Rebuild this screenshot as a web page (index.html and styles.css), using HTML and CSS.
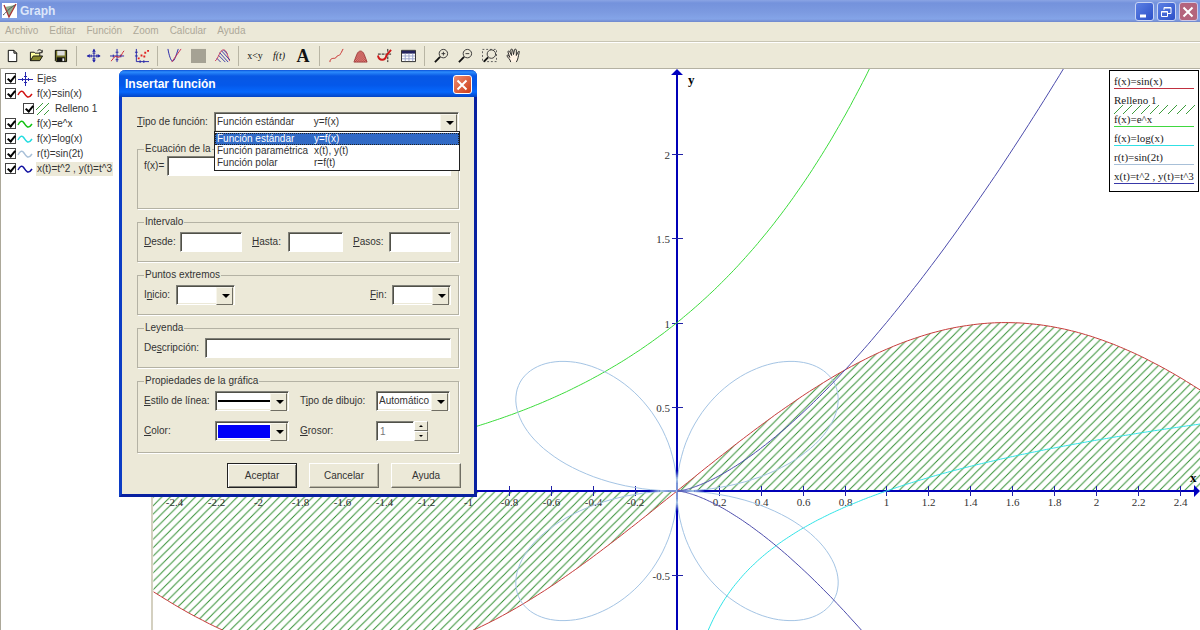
FILE: index.html
```html
<!DOCTYPE html>
<html lang="es">
<head>
  <meta charset="UTF-8" />
  <meta name="viewport" content="width=device-width, initial-scale=1.0"/>
  <title>Graph</title>
  <link rel="stylesheet" href="styles.css">
</head>
<body>
  <header class="titlebar">
    <svg class="app-icon" width="16" height="16" viewBox="0 0 16 16">
      <rect width="15" height="15" fill="#fff"/>
      <path d="M3 4l4 10L13 2z" fill="#8fae8c"/>
      <path d="M2 2l5 12L14 1" fill="none" stroke="#a33" stroke-width="1.3"/>
      <path d="M1 12c3-2 5-6 12-10" fill="none" stroke="#555"/>
    </svg>
    <h1>Graph</h1>
    <div class="win-buttons">
      <button aria-label="Minimizar"><svg width="18" height="18"><path d="M5 13h6" stroke="#fff" stroke-width="3"/></svg></button>
      <button aria-label="Restaurar"><svg width="18" height="18" fill="none" stroke="#fff"><path d="M7 7V4.500h7v6h-3M7 5h7M4.500 8.500h6v5h-6zM4 9h7"/></svg></button>
      <button class="close dim" aria-label="Cerrar"><svg width="18" height="18"><path d="M4.500 4.500l9 9M13.500 4.500l-9 9" stroke="#fff" stroke-width="2"/></svg></button>
    </div>
  </header>

  <nav class="menubar">
    <a href="#">Archivo</a>
    <a href="#">Editar</a>
    <a href="#">Función</a>
    <a href="#">Zoom</a>
    <a href="#">Calcular</a>
    <a href="#">Ayuda</a>
  </nav>

  <div class="toolbar">
    <button aria-label="Nuevo"><svg viewBox="0 0 16 16"><path d="M3.500 2.500h6l3 3v9h-9zM9.500 2.500v3h3" fill="#fff" stroke="#000"/></svg></button>
    <button aria-label="Abrir"><svg viewBox="0 0 16 16"><path d="M1.500 13.500v-9h4l1 1h5v3" fill="#ffffa0" stroke="#111"/><path d="M1.500 13.500l3-5h10l-3 5z" fill="#87872a" stroke="#111"/><path d="M9 3c2-2 4-1 5 1m0-2v3h-3" fill="none" stroke="#111"/></svg></button>
    <button aria-label="Guardar"><svg viewBox="0 0 16 16"><path d="M2.500 2.500h12v12h-11l-1-1z" fill="#75752b" stroke="#000"/><path d="M4.500 3h8v5h-8z" fill="#ddd"/><path d="M4 10h9v4H4z" fill="#111"/><path d="M10 11h2v3h-2z" fill="#eee"/></svg></button>
    <span class="sep"></span>
    <button aria-label="Ejes"><svg viewBox="0 0 16 16"><path d="M8.500 1v14M1 8.500h14" stroke="#2222a8"/><path d="M8.500 1l-2 3h4zM8.500 15.500l-2-3h4zM1 8.500l3-2v4zM15.500 8.500l-3-2v4z" fill="#2222a8"/><path d="M5.500 7v3M11.500 7v3M7 5.500h3M7 11.500h3" stroke="#2222a8"/></svg></button>
    <button aria-label="Insertar función"><svg viewBox="0 0 16 16" fill="none"><path d="M7.500 1v14M0 8.500h15M3.500 7v3M11.500 7v3M6 4.500h3M6 12.500h3" stroke="#2222a8"/><path d="M1 14c2-1 3-5 5-5s3 2 5 0 2-4 4-6" stroke="#d02030"/></svg></button>
    <button aria-label="Insertar puntos"><svg viewBox="0 0 16 16"><path d="M2.500 1v13.500H16M1 4.500h3M1 8.500h3M6.500 13v3M10.500 13v3" fill="none" stroke="#2222a8"/><path d="M4 10h2v2H4zM7 7h2v2H7zM10 8h2v2h-2zM11 4h2v2h-2zM14 2h2v2h-2z" fill="#e02020"/></svg></button>
    <span class="sep"></span>
    <button aria-label="Tangente"><svg viewBox="0 0 16 16" fill="none"><path d="M1 1c1 6 3 13 5 13s4-7 6-13" stroke="#2222a8"/><path d="M5 15L15 1" stroke="#d03050"/></svg></button>
    <button aria-label="Sombreado"><svg viewBox="0 0 16 16"><path d="M0 1h16v15H0z" fill="#a5a294"/></svg></button>
    <button aria-label="Relleno"><svg viewBox="0 0 16 16" fill="none"><path d="M0 14C4 11 5 2 9 2s4 7 7 12" stroke="#d03050"/><path d="M7 3l9 10M5 5l9 10M4 8l7 7M2 11l4 4M9 2l4 4" stroke="#3838a8"/></svg></button>
    <span class="sep"></span>
    <button class="text-icon" aria-label="Relación">x&lt;y</button>
    <button class="text-icon fn" aria-label="f(t)">f(t)</button>
    <button class="text-icon big" aria-label="Texto">A</button>
    <span class="sep"></span>
    <button aria-label="Trazar"><svg viewBox="0 0 16 16" fill="none"><path d="M1 15c0-4 3-4 5-4s2-3 4-3 2-2 3-3 1-3 2-4" stroke="#c82828"/></svg></button>
    <button aria-label="Área"><svg viewBox="0 0 16 16"><path d="M1 15L4 7c2-5 6-5 8 0l3 8z" fill="url(#dots)" stroke="#a04040"/></svg></button>
    <button aria-label="Derivada"><svg viewBox="0 0 16 16" fill="none"><path d="M1 6.500h14M11.500 1v14" stroke="#111" stroke-dasharray="3 1"/><path d="M1 8c1 6 8 6 9 0l5-6" stroke="#d01818" stroke-width="2"/></svg></button>
    <button aria-label="Tabla"><svg viewBox="0 0 16 16"><path d="M.5 2.500h15v12H.5z" fill="#fff" stroke="#222"/><path d="M1 3h14v3H1z" fill="#24245e"/><path d="M1 8.500h14M1 11.500h14M4.500 6v8M8.500 6v8M12.500 6v8" stroke="#9aa4cc"/></svg></button>
    <span class="sep"></span>
    <button aria-label="Acercar"><svg viewBox="0 0 16 16" fill="none" stroke="#333"><circle cx="10" cy="6" r="4.500"/><path d="M8 6h4M10 4v4"/><path d="M6.500 9.500L1 15" stroke="#111" stroke-width="2"/></svg></button>
    <button aria-label="Alejar"><svg viewBox="0 0 16 16" fill="none" stroke="#333"><circle cx="10" cy="6" r="4.500"/><path d="M8 6h4"/><path d="M6.500 9.500L1 15" stroke="#111" stroke-width="2"/></svg></button>
    <button aria-label="Zoom ventana"><svg viewBox="0 0 16 16" fill="none" stroke="#333"><path d="M.5 1.500h15v13H.5z" stroke="#555" stroke-dasharray="2 2"/><circle cx="10" cy="6.500" r="4.500"/><path d="M6.500 10L2 14.500" stroke="#111" stroke-width="2"/></svg></button>
    <button aria-label="Mover"><svg viewBox="0 0 16 16"><path d="M5 15c0-3-4-5-4-7 1-1 2 0 3 2L2 4c0-1 2-1 2 0l2 4-1-6c0-1 2-1 2 0l1 5 1-5c0-1 2-1 2 0v6l2-4c1-1 2 0 1 1-1 4-1 7-3 10" fill="#fff3e4" stroke="#222"/></svg></button>
  </div>

  <main class="workspace">
    <ul class="tree">
      <li><input type="checkbox" id="t0" checked><svg viewBox="0 0 16 14"><path d="M8.500 0v14M1 7.500h15M5.500 6v3M11.500 6v3M7 4.500h3M7 10.500h3" stroke="#2828b0"/></svg><label for="t0">Ejes</label></li>
      <li><input type="checkbox" id="t1" checked><svg viewBox="0 0 16 14"><use href="#wave" stroke="#d01010"/></svg><label for="t1">f(x)=sin(x)</label></li>
      <li class="child"><input type="checkbox" id="t2" checked><svg viewBox="0 0 16 14"><path d="M1 8l7-7M2 13L14 1M9 13l5-5" stroke="#3c9c3c"/></svg><label for="t2">Relleno 1</label></li>
      <li><input type="checkbox" id="t3" checked><svg viewBox="0 0 16 14"><use href="#wave" stroke="#10c010"/></svg><label for="t3">f(x)=e^x</label></li>
      <li><input type="checkbox" id="t4" checked><svg viewBox="0 0 16 14"><use href="#wave" stroke="#20dce0"/></svg><label for="t4">f(x)=log(x)</label></li>
      <li><input type="checkbox" id="t5" checked><svg viewBox="0 0 16 14"><use href="#wave" stroke="#a8c0d8"/></svg><label for="t5">r(t)=sin(2t)</label></li>
      <li><input type="checkbox" id="t6" checked><svg viewBox="0 0 16 14"><use href="#wave" stroke="#1010a0"/></svg><label class="selected" for="t6">x(t)=t^2 , y(t)=t^3</label></li>
    </ul>

    <section class="plot">
      <svg id="graph" viewBox="0 0 1047 561" preserveAspectRatio="xMinYMin slice">
        <defs>
          <pattern id="hatch" width="8" height="8" patternUnits="userSpaceOnUse" patternTransform="scale(1.05)">
            <path d="M-1 9L9-1M-1 1L1-1M7 9L9 7" stroke="#2c8c2c" stroke-width=".9"/>
          </pattern>
          <pattern id="dots" width="2" height="2" patternUnits="userSpaceOnUse">
            <path d="M0 0h2v2H0z" fill="#e8b0a8"/><path d="M0 0h1v1H0zM1 1h1v1H1z" fill="#b02020"/>
          </pattern>
          <path id="wave" d="M1 8c2-4 4-5 6-2s4 7 8 1" fill="none" stroke-width="1.500"/>
        </defs>
      </svg>
      <div class="legend">
        <p class="c-sin">f(x)=sin(x)</p>
        <p class="fill">Relleno 1<svg width="82" height="9"><path d="M0 9l9-9M9 9l9-9M18 9l9-9M27 9l9-9M36 9l9-9M45 9l9-9M54 9l9-9M63 9l9-9M72 9l9-9" stroke="#3c9c3c"/></svg></p>
        <p class="c-exp">f(x)=e^x</p>
        <p class="c-log">f(x)=log(x)</p>
        <p class="c-polar">r(t)=sin(2t)</p>
        <p class="c-param">x(t)=t^2 , y(t)=t^3</p>
      </div>
    </section>
  </main>

  <div class="dialog" role="dialog" aria-labelledby="dlg-title">
    <div class="dialog-title">
      <h2 id="dlg-title">Insertar función</h2>
      <button class="close" aria-label="Cerrar"><svg width="18" height="18"><path d="M4.500 4.500l9 9M13.500 4.500l-9 9" stroke="#fff" stroke-width="2"/></svg></button>
    </div>
    <form class="dialog-body">
      <div class="row type-row">
        <label for="tipo"><u>T</u>ipo de función:</label>
        <span class="combo">
          <select id="tipo"><option>Función estándar&nbsp;&nbsp;&nbsp;&nbsp;&nbsp;&nbsp;&nbsp;y=f(x)</option></select>
        </span>
        <ul class="dropdown">
          <li class="active"><span>Función estándar</span><span>y=f(x)</span></li>
          <li><span>Función paramétrica</span><span>x(t), y(t)</span></li>
          <li><span>Función polar</span><span>r=f(t)</span></li>
        </ul>
      </div>

      <fieldset class="equation">
        <legend>Ecuación de la</legend>
        <div class="row"><label for="fx">f(x)=</label><input type="text" id="fx" class="wide"></div>
      </fieldset>

      <fieldset>
        <legend>Intervalo</legend>
        <div class="row spread">
          <div class="row"><label class="l-short" for="desde"><u>D</u>esde:</label><input type="text" id="desde"></div>
          <div class="row"><label class="l-short" for="hasta"><u>H</u>asta:</label><input type="text" id="hasta" class="narrow"></div>
          <div class="row"><label class="l-short" for="pasos"><u>P</u>asos:</label><input type="text" id="pasos"></div>
        </div>
      </fieldset>

      <fieldset>
        <legend>Puntos extremos</legend>
        <div class="row spread">
          <div class="row"><label class="l-ini" for="inicio">I<u>n</u>icio:</label><span class="combo small"><select id="inicio"><option></option></select></span></div>
          <div class="row"><label class="l-fin" for="fin"><u>F</u>in:</label><span class="combo small"><select id="fin"><option></option></select></span></div>
        </div>
      </fieldset>

      <fieldset>
        <legend>Leyenda</legend>
        <div class="row"><label class="l-desc" for="desc">De<u>s</u>cripción:</label><input type="text" id="desc" class="wide"></div>
      </fieldset>

      <fieldset class="props">
        <legend>Propiedades de la gráfica</legend>
        <div class="props-grid">
          <label for="estilo"><u>E</u>stilo de línea:</label>
          <span class="combo line"><select id="estilo"><option></option></select></span>
          <label for="dibujo">T<u>i</u>po de dibujo:</label>
          <span class="combo"><select id="dibujo"><option>Automático</option></select></span>
          <label for="color"><u>C</u>olor:</label>
          <span class="combo color"><select id="color"><option></option></select></span>
          <label for="grosor"><u>G</u>rosor:</label>
          <span class="spin">
            <input type="text" id="grosor" value="1">
            <span class="spin-buttons">
              <button type="button" aria-label="Más"></button>
              <button type="button" class="down" aria-label="Menos"></button>
            </span>
          </span>
        </div>
      </fieldset>

      <div class="actions">
        <button type="button" class="default">Aceptar</button>
        <button type="button">Cancelar</button>
        <button type="button">Ayuda</button>
      </div>
    </form>
  </div>

  <script src="graph.js"></script>
</body>
</html>
```
FILE: styles.css
```css
* {
  box-sizing: border-box;
}

html, body {
  margin: 0;
  padding: 0;
  height: 100vh;
  overflow: hidden;
}

body {
  display: flex;
  flex-direction: column;
  background: #ece9d8;
  color: #333;
  font-family: "Liberation Sans", Arial, sans-serif;
  font-size: 10px;
  line-height: 12px;
}

button, input, select {
  font: inherit;
  color: inherit;
  margin: 0;
  padding: 0;
}

ul, p, h1, h2 {
  margin: 0;
  padding: 0;
  list-style: none;
}

/* ventana principal */
.titlebar {
  display: flex;
  align-items: center;
  flex: none;
  height: 22px;
  padding: 0 2px;
  background: linear-gradient(#8aa4e4 0, #7492dc 3px, #7c9ae0 12px, #84a4e8 19px, #7088cc 22px);
}

.titlebar h1 {
  margin-left: 2px;
  font-size: 12px;
  color: #dce6fa;
}

.win-buttons {
  display: flex;
  gap: 3px;
  margin-left: auto;
}

.win-buttons button, .close {
  width: 19px;
  height: 19px;
  border: 1px solid #c8d4f4;
  border-radius: 3px;
  background: linear-gradient(135deg, #5c80e4, #2c50c8);
}

.win-buttons svg, .close svg {
  display: block;
  margin-left: -1px;
}

.close {
  background: linear-gradient(135deg, #ee8c70, #cc3c18);
  border-color: #fff;
}

.win-buttons .dim {
  background: #b4647c;
  border-color: #ccc8e8;
}

.menubar {
  display: flex;
  flex: none;
  gap: 11px;
  height: 20px;
  padding: 3px 5px;
  border-bottom: 1px solid #c8c5b4;
}

.menubar a {
  color: #aca899;
  text-decoration: none;
}

.toolbar {
  display: flex;
  align-items: center;
  flex: none;
  height: 27px;
  border-top: 1px solid #fff;
  border-bottom: 1px solid #b4b1a2;
}

.toolbar button {
  display: flex;
  align-items: center;
  justify-content: center;
  width: 24px;
  height: 24px;
  border: 0;
  background: none;
}

.toolbar svg {
  width: 15px;
  height: 15px;
}

.toolbar .sep {
  width: 1px;
  height: 20px;
  margin: 0 4px;
  background: #b8b5a4;
}

.toolbar .text-icon {
  font-family: "Liberation Serif", serif;
  font-size: 10px;
  color: #111;
}

.toolbar .fn {
  font-style: italic;
}

.toolbar .big {
  font-size: 18px;
  font-weight: bold;
}

.workspace {
  display: flex;
  flex: 1;
  min-height: 0;
  background: #fff;
}

.tree {
  flex: none;
  width: 153px;
  padding: 2px 0 0 4px;
  border-left: 1px solid #aca899;
  border-right: 2px solid #d4d0c0;
}

.tree li {
  display: flex;
  align-items: center;
  height: 15px;
}

.tree .child {
  padding-left: 18px;
}

.tree svg {
  width: 16px;
  height: 14px;
  margin: 0 3px 0 1px;
  fill: none;
}

.tree label {
  padding: 0 1px;
  white-space: nowrap;
}

.tree .selected {
  background: #ece9d8;
  line-height: 14px;
}

.tree input {
  position: relative;
  appearance: none;
  width: 11px;
  height: 11px;
  border: 1px solid #444;
  background: #fff;
}

.tree input:checked::after {
  content: "";
  position: absolute;
  left: 3px;
  top: 0;
  width: 3px;
  height: 6px;
  border: solid #000;
  border-width: 0 2px 2px 0;
  transform: rotate(40deg);
}

.plot {
  position: relative;
  flex: 1;
  min-width: 0;
}

#graph {
  display: block;
  width: 100%;
  height: 100%;
  font-family: "Liberation Serif", serif;
  font-size: 11px;
}

.curve {
  fill: none;
  stroke-width: 1;
}

.axis {
  stroke: #0000b8;
  stroke-width: 2;
}

.tick {
  stroke: #2020a8;
}

.arrow {
  fill: #0000c0;
}

.tick-label {
  fill: #333;
}

.axis-name {
  font-size: 13px;
  font-weight: bold;
}

.legend {
  position: absolute;
  top: 1px;
  right: 1px;
  width: 90px;
  padding: 4px 4px 2px;
  border: 1px solid #000;
  background: #fff;
  color: #222;
  font-family: "Liberation Serif", serif;
  font-size: 11px;
}

.legend p {
  height: 14px;
  margin-bottom: 5px;
  border-bottom: 1px solid;
  white-space: nowrap;
}

.legend .fill {
  border-bottom: 0;
}

.legend svg {
  display: block;
  margin-top: -1px;
}

.legend .c-sin {
  border-color: #c03040;
}

.legend .c-exp {
  border-color: #40d840;
}

.legend .c-log {
  border-color: #30e0e4;
}

.legend .c-polar {
  border-color: #a8c0d8;
}

.legend .c-param {
  border-color: #3838a8;
}

/* cuadro de diálogo */
.dialog {
  position: absolute;
  left: 119px;
  top: 70px;
  width: 358px;
  border: solid #0c3cc4;
  border-width: 0 3px 3px;
  border-right-color: #0820a0;
  border-bottom-color: #0820a0;
  border-radius: 6px 6px 0 0;
  background: #ece9d8;
}

.dialog-title {
  display: flex;
  align-items: center;
  justify-content: space-between;
  height: 27px;
  margin: 0 -3px;
  padding: 1px 5px 0 6px;
  border-radius: 6px 6px 0 0;
  background: linear-gradient(#0a50d8 0, #2c8cfc 2px, #0858e4 6px, #0458ea 15px, #0668fc 22px, #0444c4 27px);
}

.dialog-title h2 {
  font-size: 12px;
  color: #fff;
}

.dialog-body {
  padding: 15px 15px 6px;
}

.row {
  display: flex;
  align-items: center;
}

.spread {
  justify-content: space-between;
}

.type-row {
  position: relative;
  height: 19px;
  margin-bottom: 12px;
}

.type-row label {
  width: 77px;
}

.type-row .combo {
  flex: 1;
}

.dropdown {
  position: absolute;
  left: 77px;
  right: -1px;
  top: 19px;
  z-index: 3;
  padding: 1px 0;
  border: 1px solid #222;
  background: #fff;
}

.dropdown li {
  display: grid;
  grid-template-columns: 97px 1fr;
  padding-left: 2px;
}

.dropdown .active {
  background: #316ac5;
  color: #fff;
  outline: 1px dotted #222;
  outline-offset: -1px;
}

fieldset {
  height: 46px;
  min-width: 0;
  margin: 0 0 7px;
  padding: 4px 7px 0 6px;
  border: 1px solid #b4b2a4;
  box-shadow: 1px 1px 0 #fff;
}

legend {
  padding: 0 1px;
}

.equation {
  height: 66px;
  padding-top: 1px;
}

.equation label {
  width: 23px;
}

.l-short {
  width: 36px;
}

.l-ini {
  width: 32px;
}

.l-fin {
  width: 22px;
}

.l-desc {
  width: 61px;
}

input[type="text"] {
  width: 62px;
  height: 20px;
  padding: 0 3px;
  border: 1px solid #fff;
  border-top-color: #808078;
  border-left-color: #808078;
  box-shadow: inset 1px 1px 0 #505048;
  background: #fff;
}

input.narrow {
  width: 55px;
}

input.wide {
  flex: 1;
  width: auto;
}

.combo {
  position: relative;
  display: block;
}

.combo select {
  display: block;
  appearance: none;
  width: 100%;
  height: 20px;
  padding: 0 16px 0 2px;
  border: 1px solid #fff;
  border-top-color: #808078;
  border-left-color: #808078;
  border-radius: 0;
  box-shadow: inset 1px 1px 0 #505048, inset -1px -1px 0 #ece9d8;
  background: #fff;
}

/* botón con flecha */
.combo::before {
  content: "";
  position: absolute;
  right: 2px;
  top: 2px;
  z-index: 1;
  width: 15px;
  height: 16px;
  border: 1px solid #f8f6ec;
  border-right-color: #706e64;
  border-bottom-color: #706e64;
  background: #ece9d8;
  pointer-events: none;
}

.combo::after {
  content: "";
  position: absolute;
  right: 5px;
  top: 9px;
  z-index: 2;
  border: 4px solid transparent;
  border-top-color: #000;
  border-bottom: 0;
  pointer-events: none;
}

.combo.small {
  width: 59px;
}

.combo.line select {
  background: linear-gradient(#000, #000) 2px 8px / 54px 2px no-repeat #fff;
}

.combo.color select {
  background: linear-gradient(#0000f8, #0000f8) 2px 3px / 53px 13px no-repeat #fff;
}

.props {
  height: 78px;
}

.props-grid {
  display: grid;
  grid-template-columns: 71px 74px 87px 74px;
  row-gap: 10px;
  align-items: center;
}

.props-grid label:nth-of-type(even) {
  padding-left: 11px;
}

.spin {
  display: flex;
}

.spin input[type="text"] {
  width: 38px;
  color: #777;
}

.spin-buttons {
  display: flex;
  flex-direction: column;
}

.spin-buttons button {
  position: relative;
  width: 14px;
  height: 10px;
  border: 1px solid #fff;
  border-right-color: #706e64;
  border-bottom-color: #706e64;
  background: #ece9d8;
}

.spin-buttons button::after {
  content: "";
  position: absolute;
  left: 4px;
  top: 3px;
  border: 2px solid transparent;
  border-top: 0;
  border-bottom-color: #000;
}

.spin-buttons .down::after {
  border-top: 2px solid #000;
  border-bottom: 0;
}

.actions {
  display: flex;
  justify-content: flex-end;
  gap: 12px;
  margin: 10px -2px 0 0;
}

.actions button {
  width: 70px;
  height: 25px;
  border: 1px solid #fff;
  border-right-color: #706e64;
  border-bottom-color: #706e64;
  background: #ece9d8;
  box-shadow: inset -1px -1px 0 #b8b5a4;
}

.actions .default {
  border-color: #222;
  box-shadow: inset 1px 1px 0 #fff, inset -1px -1px 0 #808078;
}
```
FILE: graph.js
```js
const svg = document.getElementById('graph');
const NS = 'http://www.w3.org/2000/svg';

// origen y escala de los ejes
const ox = 524, oy = 422;
const sx = 209.4, sy = 168.4;

const px = x => ox + x * sx;
const py = y => oy - y * sy;

function add(tag, attrs, text) {
  const el = document.createElementNS(NS, tag);
  for (const k in attrs) el.setAttribute(k, attrs[k]);
  if (text) el.textContent = text;
  svg.appendChild(el);
  return el;
}

function points(fn, from, to, steps) {
  const list = [];
  for (let i = 0; i <= steps; i++) {
    const [x, y] = fn(from + (to - from) * i / steps);
    list.push(px(x).toFixed(1) + ' ' + py(y).toFixed(1));
  }
  return 'M' + list.join('L');
}

function curve(fn, from, to, color) {
  add('path', { class: 'curve', d: points(fn, from, to, 300), stroke: color });
}

const sine = t => [t, Math.sin(t)];

// relleno entre sin(x) y el eje
add('path', { d: points(sine, -2.5, 2.5, 300) + `L${px(2.5)} ${oy}L0 ${oy}Z`, fill: 'url(#hatch)' });

// ejes
add('path', { class: 'axis', d: `M0 ${oy}H1043M${ox} 4V900` });
add('path', { class: 'arrow', d: `M${ox} 0l6 6h-12zM1047 ${oy}l-6 -6v12z` });

for (let i = -12; i <= 12; i++) {
  if (i === 0) continue;
  const x = Math.round(px(i / 5)) + 0.5;
  add('path', { class: 'tick', d: `M${x} ${oy - 5}v10` });
  add('text', { class: 'tick-label', x: x, y: oy + 15, 'text-anchor': 'middle' }, String(i / 5));
}

for (let i = -1; i <= 4; i++) {
  if (i === 0) continue;
  const y = Math.round(py(i / 2)) + 0.5;
  add('path', { class: 'tick', d: `M${ox - 5} ${y}h11` });
  add('text', { class: 'tick-label', x: ox - 7, y: y + 4, 'text-anchor': 'end' }, String(i / 2));
}

add('text', { class: 'axis-name', x: ox + 11, y: 15 }, 'y');
add('text', { class: 'axis-name', x: 1037, y: oy - 9 }, 'x');

curve(sine, -2.5, 2.5, '#c83c3c');
curve(t => [t, Math.exp(t)], -2.5, 0.92, '#3cdc3c');
curve(t => [t, Math.log10(t)], 0.05, 2.5, '#30e4e8');
curve(t => [Math.sin(2 * t) * Math.cos(t), Math.sin(2 * t) * Math.sin(t)], 0, 2 * Math.PI, '#a4c4e4');
curve(t => [t * t, t * t * t], -1.4, 1.37, '#4c4cac');
```
